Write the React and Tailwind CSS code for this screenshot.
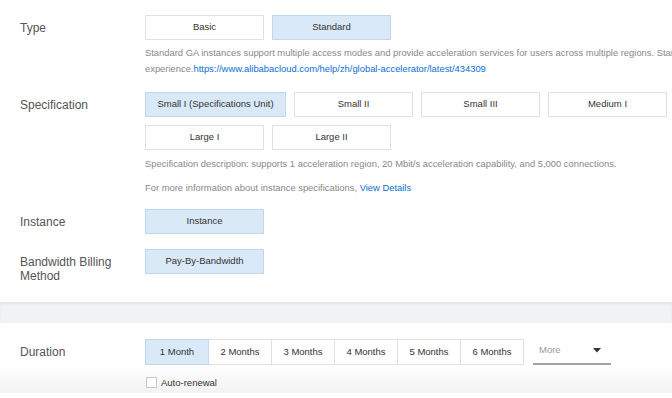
import React, { useState } from "react";

const specs = [
    { name: "Small I (Specifications Unit)", w: "w-[141px]" },
    { name: "Small II", w: "w-[119px]" },
    { name: "Small III", w: "w-[119px]" },
    { name: "Medium I", w: "w-[119px]" },
];

const months = ["1 Month", "2 Months", "3 Months", "4 Months", "5 Months", "6 Months"];

function Opt({ label, active, onClick, className = "" }) {
    return (
        <button
            type="button"
            onClick={onClick}
            className={`h-[25px] border text-[9.5px] text-[#333] flex items-center justify-center shrink-0 ${active ? "bg-[#d9e9f8] border-[#bfd8f0]" : "bg-white border-[#e1e1e1]"} ${className}`}
        >
            {label}
        </button>
    );
}

function Row({ label, children, className = "" }) {
    return (
        <div className={`flex ${className}`}>
            <div className="w-[125px] h-[25px] shrink-0 pt-[6px] text-[12px] leading-[14px] text-[#555]">{label}</div>
            <div className="flex-1 min-w-0">{children}</div>
        </div>
    );
}

export default function App() {
    const [type, setType] = useState("Standard");
    const [spec, setSpec] = useState("Small I (Specifications Unit)");
    const [month, setMonth] = useState("1 Month");
    const [autoRenew, setAutoRenew] = useState(false);

    return (
        <div className="w-[672px] h-[398px] overflow-hidden bg-white font-['Liberation_Sans',Arial,sans-serif]">
            {/* config section */}
            <div className="pl-[20px] pt-[15px] pb-[28px]">
                <Row label="Type">
                    <div className="flex gap-[8px]">
                        {["Basic", "Standard"].map(t => (
                            <Opt key={t} label={t} active={type === t} onClick={() => setType(t)} className="w-[119px]" />
                        ))}
                    </div>
                    <div className="mt-[5px] text-[9.4px] leading-[16px] text-[#888] whitespace-nowrap overflow-hidden">
                        <div>Standard GA instances support multiple access modes and provide acceleration services for users across multiple regions. Standard GA</div>
                        <div>
                            experience.<span className="text-[#0b6fd6]">https://www.alibabacloud.com/help/zh/global-accelerator/latest/434309</span>
                        </div>
                    </div>
                </Row>

                <Row label="Specification" className="mt-[15px]">
                    <div className="flex gap-[8px]">
                        {specs.map(s => (
                            <Opt key={s.name} label={s.name} active={spec === s.name} onClick={() => setSpec(s.name)} className={s.w} />
                        ))}
                    </div>
                    <div className="flex gap-[8px] mt-[8px]">
                        {["Large I", "Large II"].map(s => (
                            <Opt key={s} label={s} active={spec === s} onClick={() => setSpec(s)} className="w-[119px]" />
                        ))}
                    </div>
                    <div className="mt-[6px] text-[9.4px] leading-[16px] text-[#888] whitespace-nowrap">
                        Specification description: supports 1 acceleration region, 20 Mbit/s acceleration capability, and 5,000 connections.
                    </div>
                    <div className="mt-[8px] text-[9.4px] leading-[16px] text-[#888] whitespace-nowrap">
                        For more information about instance specifications, <span className="text-[#0b6fd6]">View Details</span>
                    </div>
                </Row>

                <Row label="Instance" className="mt-[13px]">
                    <Opt label="Instance" active className="w-[119px]" />
                </Row>

                <Row label="Bandwidth Billing Method" className="mt-[15px]">
                    <Opt label="Pay-By-Bandwidth" active className="w-[119px]" />
                </Row>
            </div>

            {/* divider band */}
            <div className="h-[21px] bg-[#f1f2f4] shadow-[inset_0_2px_2px_rgba(0,0,0,0.05)]"></div>

            {/* duration section */}
            <div className="pt-[16px]">
                <div className="flex pl-[20px]">
                    <div className="w-[125px] shrink-0 flex items-center text-[12px] text-[#555]">Duration</div>
                    <div className="flex items-end">
                        {months.map((m, i) => (
                            <button
                                key={m}
                                type="button"
                                onClick={() => setMonth(m)}
                                className={`h-[26px] w-[64px] border text-[9.5px] text-[#333] ${i > 0 ? "-ml-px" : ""} ${month === m ? "bg-[#d9e9f8] border-[#bfd8f0] relative z-10" : "bg-white border-[#e1e1e1]"}`}
                            >
                                {m}
                            </button>
                        ))}
                        <div className="ml-[9px] w-[78px] h-[26px] border-b-2 border-[#a3a3a3] flex items-center justify-between pl-[6px] pr-[10px] pb-[2px]">
                            <span className="text-[9.5px] text-[#999]">More</span>
                            <svg width="8" height="5" viewBox="0 0 8 5">
                                <path d="M0 0 L8 0 L4 4.5 Z" fill="#333" />
                            </svg>
                        </div>
                    </div>
                </div>
                <div className="h-[28px] bg-gradient-to-b from-white to-[#f2f2f2] pl-[146px] pt-[12px]">
                    <label className="flex items-center gap-[4px] cursor-pointer">
                        <input type="checkbox" className="hidden" checked={autoRenew} onChange={e => setAutoRenew(e.target.checked)} />
                        <span className={`w-[11px] h-[11px] border ${autoRenew ? "bg-[#0b6fd6] border-[#0b6fd6]" : "bg-white border-[#c8c8c8]"}`}></span>
                        <span className="text-[9.5px] leading-[11px] text-[#333]">Auto-renewal</span>
                    </label>
                </div>
            </div>
        </div>
    );
}
